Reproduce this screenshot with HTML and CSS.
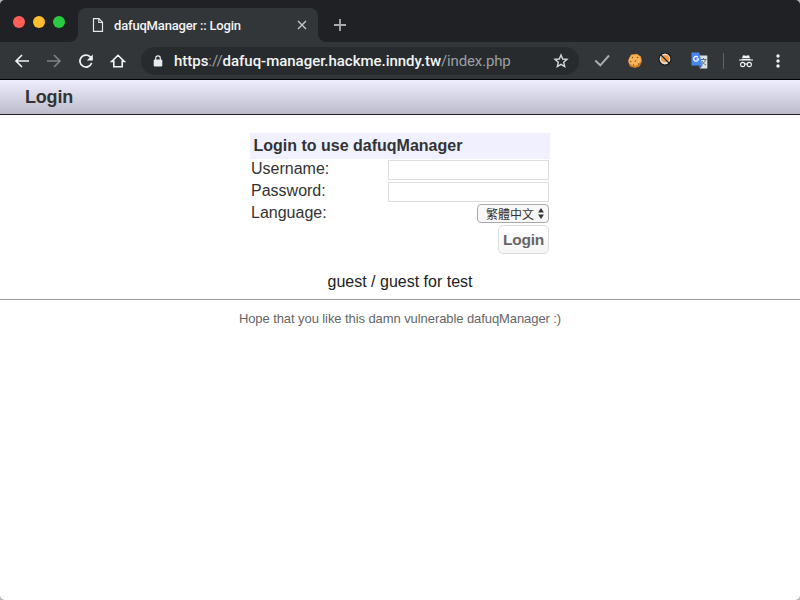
FILE: index.html
```html
<!DOCTYPE html>
<html lang="zh-Hant">
<head>
<meta charset="utf-8">
<title>dafuqManager :: Login</title>
<link rel="stylesheet" href="styles.css">
</head>
<body>
<div class="window">
  <header class="chrome">
    <div class="tabstrip">
      <div class="lights"><i class="red"></i><i class="yellow"></i><i class="green"></i></div>
      <div class="tab">
        <svg class="doc" width="12" height="16" viewBox="0 0 12 16" fill="none" stroke="#e4e6e8" stroke-width="1.2"><path d="M1.5 1.700h5.400l3.600 3.600v9H1.500zM6.800 1.900v3.600h3.600"/></svg>
        <span class="tab-title">dafuqManager :: Login</span>
        <svg class="close" width="10" height="10" viewBox="0 0 10 10" stroke="#c4c7ca" stroke-width="1.4"><path d="M1 1l8 8M9 1l-8 8"/></svg>
      </div>
      <svg class="plus" width="12" height="12" viewBox="0 0 12 12" stroke="#a9acaf" stroke-width="1.8"><path d="M0 6h12M6 0v12"/></svg>
    </div>
    <div class="toolbar">
      <span class="nav"><svg width="16" height="16" viewBox="0 0 16 16" fill="none" stroke="#f1f3f4" stroke-width="1.6"><path d="M15 8H2.2M8 2L2 8l6 6"/></svg></span>
      <span class="nav"><svg width="16" height="16" viewBox="0 0 16 16" fill="none" stroke="#808386" stroke-width="1.6"><path d="M1 8h12.800M8 2l6 6-6 6"/></svg></span>
      <span class="nav"><svg width="16" height="16" viewBox="0 0 16 16" fill="none" stroke="#f1f3f4" stroke-width="1.7"><path d="M13.600 10A6 6 0 1 1 12.200 3.800L13 4.600"/><path d="M14.800 1.500v6H8.800z" fill="#f1f3f4" stroke="none"/></svg></span>
      <span class="nav"><svg width="16" height="16" viewBox="0 0 16 16" fill="none" stroke="#f1f3f4" stroke-width="1.6"><path d="M1.800 8.400L8 2.300l6.200 6.100h-2v5.400H3.800V8.400z"/></svg></span>
      <div class="omnibox">
        <svg class="lock" width="10" height="12" viewBox="0 0 10 12"><rect x=".7" y="4.500" width="8.600" height="7" rx="1" fill="#e8eaed"/><path d="M2.700 5V3.200a2.300 2.300 0 0 1 4.600 0V5" fill="none" stroke="#e8eaed" stroke-width="1.200"/></svg>
        <span class="url"><b>https</b>://<b>dafuq-manager.hackme.inndy.tw</b><span class="path">/index.php</span></span>
        <svg class="star" width="16" height="16" viewBox="0 0 16 16" fill="none" stroke="#d5d8db" stroke-width="1.400"><path d="M8 2l1.700 4 4.300.4-3.300 2.900 1 4.200L8 11.300l-3.700 2.200 1-4.200L2 6.400 6.300 6z"/></svg>
      </div>
      <span class="ext check"><svg width="16" height="16" viewBox="0 0 16 16" fill="none" stroke="#aaacae" stroke-width="1.900"><path d="M1.300 7.500l5 4.800L15 2.500"/></svg></span>
      <span class="ext cookie"><svg width="16" height="16" viewBox="0 0 16 16"><path d="M4 1.500L10 .8l4 2.700 1 5-2.500 5L8 15l-5-1.500L.8 8z" fill="#d08022"/><path d="M4.500 2L10 1.500l3.500 2.500.5 4-3 4-5 1-4-3-.2-4z" fill="#f5b45a"/><g fill="#8a4a12"><circle cx="5.500" cy="4.500" r=".7"/><circle cx="10.500" cy="4.500" r=".7"/><circle cx="3.700" cy="8.500" r=".7"/><circle cx="8.500" cy="8" r=".8"/><circle cx="6.500" cy="12" r=".7"/><circle cx="11.500" cy="11" r=".7"/></g></svg></span>
      <span class="ext blocked"><svg width="14" height="14" viewBox="0 0 14 14"><circle cx="7" cy="7" r="6" fill="#e9dfd2" stroke="#171717" stroke-width="1.200"/><path d="M3 5l3-2 4 .5 1.500 3L10 10l-4 .5L3 8.500z" fill="#ee9c4b"/><path d="M2.500 2.500l9 9" stroke="#252525" stroke-width="1.300"/></svg></span>
      <span class="ext translate"><svg width="17" height="17" viewBox="0 0 17 17"><path d="M6 3.500h10.300v13H9z" fill="#dcdfe2"/><path d="M9.500 7.500h6M12.500 6v1.500M14.500 7.500c-.5 2.500-2 4-4 5M11 9c.7 1.600 2 3 4 4" stroke="#60747c" fill="none"/><path d="M.5.500h7.700l3.300 13H.5z" fill="#4687f0"/><path d="M8 13.500h3.500L9 16.300z" fill="#3550b8"/><path d="M7 5.300A2.400 2.400 0 1 0 7.500 7H5.300" stroke="#fff" stroke-width="1.200" fill="none"/></svg></span>
      <span class="divider"></span>
      <span class="ext incognito"><svg width="14" height="14" viewBox="0 0 14 14"><path d="M4 1.200l3 .5 3-.5.900 2.800H3.100zM2.600 4.700h8.800v.7H14v1.200H0V5.400h2.600z" fill="#f1f3f4"/><g fill="none" stroke="#f1f3f4" stroke-width="1.100"><circle cx="3.700" cy="10.500" r="2.100"/><circle cx="10.300" cy="10.500" r="2.100"/><path d="M5.800 10.200q1.200-.7 2.400 0"/></g></svg></span>
      <span class="ext menu"><svg width="4" height="14" viewBox="0 0 4 14" fill="#f1f3f4"><circle cx="2" cy="2" r="1.700"/><circle cx="2" cy="7" r="1.700"/><circle cx="2" cy="12" r="1.700"/></svg></span>
    </div>
  </header>
  <h1 class="banner"><span>Login</span></h1>
  <main>
    <form class="login">
      <h2><span>Login to use dafuqManager</span></h2>
      <div class="row"><label for="user">Username:</label><input id="user" type="text"></div>
      <div class="row"><label for="pass">Password:</label><input id="pass" type="password"></div>
      <div class="row"><label>Language:</label>
        <span class="select"><span>繁體中文</span><svg width="6" height="11" viewBox="0 0 6 11" fill="#333"><path d="M3 0l2.900 4.500H.1zM3 11L.1 6.500h5.800z"/></svg></span>
      </div>
      <button type="button">Login</button>
    </form>
    <p class="hint">guest / guest for test</p>
    <hr>
    <p class="footer">Hope that you like this damn vulnerable dafuqManager :)</p>
  </main>
</div>
</body>
</html>
```
FILE: styles.css
```css
* { box-sizing: border-box; }
html { background: #b5b5b5; }
body { margin: 0; font-family: "Liberation Sans", "Noto Sans CJK TC", sans-serif; font-size: 16px; color: #333; }
svg { display: block; flex: none; }
.window { height: 600px; background: #fff; border-radius: 5px; overflow: hidden; }
.chrome { height: 80px; background: #323639; border-bottom: 1px solid #000; font-family: Roboto, sans-serif; }
.tabstrip { height: 42px; background: #202124; display: flex; align-items: flex-end; }
.lights { display: flex; gap: 8px; width: 78px; height: 42px; padding: 15.500px 0 0 13px; }
.lights i { width: 12px; height: 12px; border-radius: 50%; }
.red { background: #ff5f57; }
.yellow { background: #ffbd2e; }
.green { background: #28ca41; }
.tab { position: relative; width: 240px; height: 34px; background: #323639; border-radius: 8px 8px 0 0; display: flex; align-items: center; padding: 0 11px 0 14px; }
.tab::before, .tab::after { content: ""; position: absolute; bottom: 0; width: 8px; height: 8px; }
.tab::before { left: -8px; background: radial-gradient(circle at 0 0, #202124 7.500px, #323639 8px); }
.tab::after { right: -8px; background: radial-gradient(circle at 100% 0, #202124 7.500px, #323639 8px); }
.tab-title { margin-left: 10px; font-size: 13px; font-weight: 500; letter-spacing: -0.18px; color: #f1f3f4; white-space: nowrap; }
.close { margin-left: auto; }
.plus { margin: 0 0 11px 16px; }
.toolbar { height: 37px; display: flex; align-items: center; padding-left: 6px; }
.nav { width: 32px; display: flex; justify-content: center; }
.omnibox { width: 438px; height: 28px; margin: 0 7px; border-radius: 14px; background: #282b2e; display: flex; align-items: center; padding: 0 10px 0 12px; }
.url { margin-left: 11px; font-size: 15px; letter-spacing: -0.03px; color: #9aa0a6; white-space: nowrap; }
.url b { font-weight: 500; color: #f1f3f4; }
.path { letter-spacing: -0.15px; }
.star { margin-left: auto; }
.ext { display: flex; justify-content: center; flex: none; }
.check { width: 32px; }
.cookie { width: 34px; }
.blocked { width: 26px; }
.blocked svg { margin-bottom: 3px; }
.translate { width: 42px; }
.divider { width: 1px; height: 16px; margin: 0 2px 0 3px; background: #5f6368; }
.incognito { width: 40px; }
.menu { width: 24px; }
.banner { margin: 0; height: 35px; padding-left: 25px; display: flex; align-items: center; font-size: 18px; letter-spacing: -0.2px; background: linear-gradient(#eeeeff, #bbbbcc); border-bottom: 1px solid #222; }
.login { width: 300px; margin: 18px auto 0; display: flex; flex-direction: column; }
.login h2 { margin: 0 0 1px; height: 26px; padding-left: 3.500px; background: #f0f0ff; font-size: 16px; line-height: 26px; }
.row { height: 22px; padding: 0 1px; display: flex; justify-content: space-between; line-height: 17px; }
input { width: 161px; height: 20px; border: 1px solid #ddd; padding: 0; background: #fff; }
.select { width: 72px; height: 19px; padding: 0 4px 0 8px; display: flex; align-items: center; justify-content: space-between; border: 1px solid #aaa; border-radius: 4px; background: #f8f8f8; font-size: 12px; line-height: 17px; }
.select span { padding-top: 4px; }
button { align-self: flex-end; width: 51px; height: 29px; margin: -1px 1px 0 0; padding: 0; border: 1px solid #ddd; border-radius: 5px; background: linear-gradient(#fff, #f5f5f5); color: #666; font: bold 15.500px "Liberation Sans", sans-serif; letter-spacing: -0.2px; }
.hint { margin: 18px 0 0; line-height: 20px; text-align: center; color: #222; }
hr { margin: 7px 0 0; border: 0; border-top: 1px solid #999; }
.footer { margin: 10px 0 0; text-align: center; font-size: 13px; letter-spacing: -0.08px; line-height: 18px; color: #666; }
```
